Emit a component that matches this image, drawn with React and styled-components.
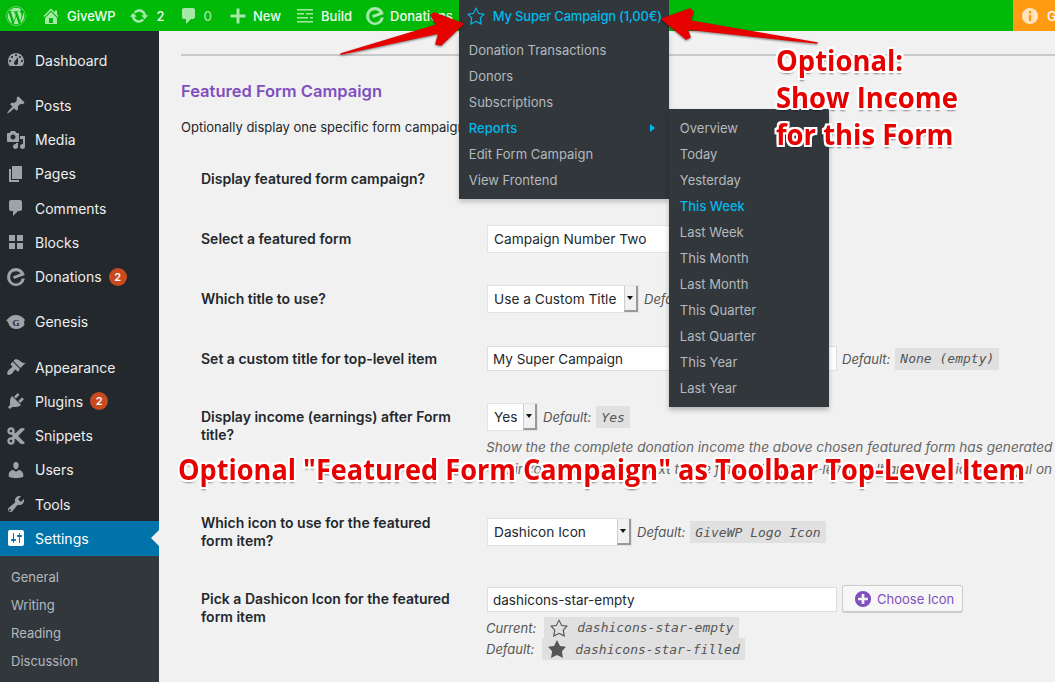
import React from "react";
import styled, { createGlobalStyle } from "styled-components";
import { FaWordpress, FaCut } from "react-icons/fa";

const GlobalStyle = createGlobalStyle`
  html, body {
    margin: 0;
    padding: 0;
    background: #f1f1f1;
    font-family: Inter, "Liberation Sans", sans-serif;
    overflow: hidden;
  }
`;

const icons = {
  dashboard:
    "M3.76 16h12.48c1.1-1.37 1.76-3.11 1.76-5 0-4.42-3.58-8-8-8s-8 3.58-8 8c0 1.89.66 3.63 1.76 5zM10 4c.55 0 1 .45 1 1s-.45 1-1 1-1-.45-1-1 .45-1 1-1zM6 6c.55 0 1 .45 1 1s-.45 1-1 1-1-.45-1-1 .45-1 1-1zm8 0c.55 0 1 .45 1 1s-.45 1-1 1-1-.45-1-1 .45-1 1-1zm-5.37 5.55L12 7v6c0 1.1-.9 2-2 2s-2-.9-2-2c0-.57.24-1.08.63-1.45zM4 10c.55 0 1 .45 1 1s-.45 1-1 1-1-.45-1-1 .45-1 1-1zm12 0c.55 0 1 .45 1 1s-.45 1-1 1-1-.45-1-1 .45-1 1-1z",
  pin: "M10.44 3.02l1.82-1.82 6.36 6.35-1.83 1.82c-1.05-.68-2.48-.57-3.41.36l-.75.75c-.92.93-1.04 2.35-.35 3.41l-1.83 1.82-2.41-2.41-2.8 2.79c-.42.42-3.38 2.71-3.8 2.29s1.86-3.39 2.28-3.81l2.79-2.79L4.1 9.36l1.83-1.82c1.05.69 2.48.57 3.41-.36l.75-.75c.93-.92 1.05-2.35.35-3.41z",
  media:
    "M13 11V4c0-.55-.45-1-1-1h-1.67L9 1H5L3.67 3H2c-.55 0-1 .45-1 1v7c0 .55.45 1 1 1h10c.55 0 1-.45 1-1zM7 4.5c1.38 0 2.5 1.12 2.5 2.5S8.38 9.5 7 9.5 4.5 8.38 4.5 7 5.62 4.5 7 4.5zM14 6h5v10.5c0 1.38-1.12 2.5-2.5 2.5S14 17.88 14 16.5s1.12-2.5 2.5-2.5c.17 0 .34.02.5.05V9h-3V6zm-4 8.05V13h2v3.5c0 1.38-1.12 2.5-2.5 2.5S7 17.88 7 16.5 8.12 14 9.5 14c.17 0 .34.02.5.05z",
  pages: "M6 15V2h10v13H6zm-1 1h8v2H3V5h2v11z",
  comment:
    "M5 2h9c1.1 0 2 .9 2 2v7c0 1.1-.9 2-2 2h-2l-5 5v-5H5c-1.1 0-2-.9-2-2V4c0-1.1.9-2 2-2z",
  blocks: "M3 3h6v6H3zM11 3h6v6h-6zM3 11h6v6H3zM11 11h6v6h-6z",
  appearance:
    "M14.48 11.06L7.41 3.99l1.5-1.5c.5-.56 2.3-.47 3.51.32 1.21.8 1.43 1.28 2.91 2.1 1.18.64 2.45 1.26 4.45.85zm-.71.71L6.7 4.7 4.93 6.47c-.39.39-.39 1.02 0 1.41l1.06 1.06c.39.39.39 1.03 0 1.42-.6.6-1.43 1.11-2.21 1.69-.35.26-.7.53-1.01.84-1.34 1.34-1.81 3.09-1.44 4.22.17.44.35.61.67.64 1.13.38 2.88-.1 4.24-1.46.31-.31.58-.66.84-1.01.58-.78 1.09-1.61 1.69-2.21.39-.39 1.03-.39 1.42 0l1.06 1.06c.39.39 1.02.39 1.41 0z",
  plugins:
    "M13.11 4.36L9.87 7.6 8 5.73l3.24-3.24c.35-.34 1.05-.2 1.56.32.52.51.66 1.21.31 1.55zm-8 1.77l.91-1.12 9.01 9.01-1.19.84c-.71.71-2.63 1.16-3.82 1.16H6.14L4.9 17.26c-.59.59-1.54.59-2.12 0-.59-.58-.59-1.53 0-2.12l1.24-1.24v-3.88c0-1.13.4-3.19 1.09-3.89zm7.26 3.97l3.24-3.24c.34-.35 1.04-.21 1.55.31.52.51.66 1.21.31 1.55l-3.24 3.25z",
  users:
    "M10 9.25c-2.27 0-2.73-3.44-2.73-3.44C7 4.02 7.82 2 9.97 2c2.16 0 2.98 2.02 2.71 3.81 0 0-.41 3.44-2.68 3.44zm0 2.57L12.72 10c2.39 0 4.52 2.33 4.52 4.53v2.49s-3.65 1.13-7.24 1.13c-3.65 0-7.24-1.13-7.24-1.13v-2.49c0-2.25 1.94-4.48 4.47-4.48z",
  tools:
    "M16.68 9.77c-1.34 1.34-3.3 1.67-4.95.99l-5.41 6.52c-.99.99-2.59.99-3.57 0-.99-.98-.99-2.58 0-3.57l6.52-5.42c-.68-1.65-.35-3.61.99-4.95 1.28-1.28 3.12-1.62 4.72-1.06l-2.89 2.89 2.82 2.82 2.89-2.87c.53 1.58.18 3.4-1.12 4.67zM3.18 16.82c.39.39 1.02.39 1.41 0 .39-.39.39-1.02 0-1.41-.39-.39-1.02-.39-1.41 0-.39.39-.39 1.02 0 1.41z",
  settings:
    "M18 16V4c0-1.1-.9-2-2-2H4c-1.1 0-2 .9-2 2v12c0 1.1.9 2 2 2h12c1.1 0 2-.9 2-2zM8 11h1c.55 0 1 .45 1 1s-.45 1-1 1H8v1.5c0 .28-.22.5-.5.5s-.5-.22-.5-.5V13H6c-.55 0-1-.45-1-1s.45-1 1-1h1V5.5c0-.28.22-.5.5-.5s.5.22.5.5V11zm5-2h-1c-.55 0-1-.45-1-1s.45-1 1-1h1V5.5c0-.28.22-.5.5-.5s.5.22.5.5V7h1c.55 0 1 .45 1 1s-.45 1-1 1h-1v5.5c0 .28-.22.5-.5.5s-.5-.22-.5-.5V9z",
  home: "M16 8.5l1.53 1.53-1.06 1.06L10 4.62l-6.47 6.47-1.06-1.06L10 2.5l4 4v-2h2v4zm-6-2.46l6 5.99V18H4v-5.97zM12 17v-5H8v5h4z",
  update:
    "M10.2 3.28c3.53 0 6.43 2.61 6.92 6h2.08l-3.5 4-3.5-4h2.32c-.45-1.97-2.21-3.44-4.32-3.44-1.45 0-2.73.71-3.54 1.78L4.95 5.66C6.23 4.2 8.11 3.28 10.2 3.28zm-.4 13.44c-3.52 0-6.43-2.61-6.92-6H.8l3.5-4c1.17 1.33 2.33 2.67 3.5 4H5.48c.45 1.97 2.21 3.44 4.32 3.44 1.45 0 2.73-.71 3.54-1.78l1.71 1.95c-1.28 1.46-3.15 2.39-5.25 2.39z",
  plus: "M17.5 8.5v3h-6v6h-3v-6h-6v-3h6v-6h3v6z",
  build: "M2 3h16v1.5H2zM2 7h7v1.5H2zM11 7h7v1.5h-7zM2 11h11v1.5H2zM15 11h3v1.5h-3zM2 15h16v1.5H2z",
  starEmpty:
    "M10 1L7 7l-6 .75 4.13 4.62L4 19l6-3 6 3-1.12-6.63L19 7.75 13 7zm0 2.24l2.34 4.68 4.34.54-3.06 3.43.84 4.98L10 14.76l-4.46 2.13.84-4.98-3.06-3.43 4.34-.54z",
  starFilled: "M10 1l3 6 6 .75-4.12 4.62L16 19l-6-3-6 3 1.13-6.63L1 7.75 7 7z",
  plusAlt:
    "M10 1a9 9 0 1 0 0 18 9 9 0 0 0 0-18zm5.5 10.5h-4v4h-3v-4h-4v-3h4v-4h3v4h4z",
  info: "M10 1a9 9 0 1 0 0 18 9 9 0 0 0 0-18zm-1.3 3.5h2.6v2.6H8.7zM8.7 9h2.6v6.5H8.7z",
  give: "M10 1a9 9 0 1 0 8.9 10.5h-3.2A5.8 5.8 0 0 1 4.2 10 5.8 5.8 0 0 1 14.6 6.5L7 9.2l1 2.8 10.8-3.9A9 9 0 0 0 10 1z",
};

const Glyph = ({ name, size = 20, color }) => (
  <svg width={size} height={size} viewBox="0 0 20 20" fill={color || "currentColor"} fillRule="evenodd" style={{ flex: "none" }}>
    <path d={icons[name]} />
  </svg>
);

const GenesisIcon = () => (
  <svg width="20" height="20" viewBox="0 0 20 20" style={{ flex: "none" }}>
    <path
      fill="currentColor"
      d="M0 8c2.5-.5 3.5-5 9.5-5 4.5 0 7.5 2 9.5 5-.6.8-1 1.5-1 2.5s.4 1.2.8 1.8C17 15.5 14 17 10 17c-4.5 0-6.5-3-7.500-5.500C2 10 1 9 0 8z"
    />
    <text x="10" y="13.5" textAnchor="middle" fontSize="9" fontWeight="700" fill="#23282d" fontFamily="Liberation Serif, serif">G</text>
  </svg>
);

const Page = styled.div`
  position: relative;
  width: 1055px;
  height: 682px;
  overflow: hidden;
  background: #f1f1f1;
  color: #23282d;
`;

/* top bar */
const Bar = styled.div`
  position: relative;
  z-index: 5;
  display: flex;
  align-items: center;
  height: 31px;
  background: #00b908;
  color: #f0fbf0;
  font-size: 13px;
  font-weight: 500;
`;
const BarItem = styled.div`
  display: flex;
  align-items: center;
  gap: ${(p) => p.$gap || 8}px;
  margin-left: ${(p) => p.$left || 0}px;
  color: ${(p) => (p.$dim ? "#9fe6a2" : "inherit")};
  svg {
    color: #a6e8a8;
  }
`;
const Campaign = styled.div`
  position: relative;
  display: flex;
  align-items: center;
  gap: 7px;
  width: 210px;
  height: 31px;
  margin-left: 6px;
  padding-left: 7px;
  box-sizing: border-box;
  background: #32373c;
  color: #00b9eb;
  letter-spacing: -0.2px;
`;
const Dropdown = styled.div`
  position: absolute;
  top: 31px;
  left: 0;
  width: 210px;
  padding: 6px 0;
  background: #32373c;
  box-shadow: 0 3px 5px rgba(0, 0, 0, 0.2);
  font-weight: 400;
  letter-spacing: 0;
`;
const Flyout = styled.div`
  position: absolute;
  top: 109px;
  left: 210px;
  width: 160px;
  padding: 6px 0;
  background: #32373c;
  box-shadow: 0 3px 5px rgba(0, 0, 0, 0.25);
  letter-spacing: 0;
`;
const MenuLink = styled.div`
  position: relative;
  height: 26px;
  line-height: 26px;
  padding-left: ${(p) => p.$indent || 10}px;
  color: ${(p) => (p.$active ? "#00b9eb" : "#b4b9be")};
  font-size: 13px;
  font-weight: ${(p) => (p.$active ? 500 : 400)};
  white-space: nowrap;
`;
const Caret = styled.span`
  position: absolute;
  top: 9px;
  right: 14px;
  border-left: 5px solid #00b9eb;
  border-top: 4px solid transparent;
  border-bottom: 4px solid transparent;
`;
const Notice = styled.div`
  display: flex;
  align-items: center;
  gap: 8px;
  width: 42px;
  height: 31px;
  margin-left: auto;
  padding-left: 8px;
  box-sizing: border-box;
  overflow: hidden;
  background: #ff9a12;
  color: #ffe3bd;
  span {
    color: #fff;
  }
`;

/* layout */
const Body = styled.div`
  display: flex;
  height: 651px;
`;
const Sidebar = styled.nav`
  flex: none;
  width: 159px;
  padding-top: 12px;
  box-sizing: border-box;
  background: #23282d;
`;
const SideItem = styled.div`
  position: relative;
  display: flex;
  align-items: center;
  height: 34.25px;
  margin-top: ${(p) => (p.$sep ? 11 : 0)}px;
  padding-left: 6px;
  gap: 9px;
  box-sizing: border-box;
  background: ${(p) => (p.$current ? "#0073aa" : "transparent")};
  color: ${(p) => (p.$current ? "#fff" : "#eeeeee")};
  font-size: 14px;
  svg {
    color: ${(p) => (p.$current ? "#fff" : "#9ea3a8")};
  }
`;
const Pointer = styled.span`
  position: absolute;
  top: 9px;
  right: 0;
  border-right: 8px solid #f1f1f1;
  border-top: 8px solid transparent;
  border-bottom: 8px solid transparent;
`;
const Badge = styled.span`
  display: inline-block;
  width: 18px;
  height: 18px;
  margin-left: -2px;
  border-radius: 50%;
  background: #ca4a1f;
  color: #fff;
  font-size: 11px;
  font-weight: 600;
  line-height: 18px;
  text-align: center;
`;
const SubMenu = styled.div`
  padding-top: 7px;
  background: #32373c;
  height: 130px;
`;
const SubItem = styled.div`
  height: 28.3px;
  line-height: 28.3px;
  padding-left: 11px;
  color: #b4b9be;
  font-size: 13px;
`;

/* main */
const Main = styled.main`
  flex: 1;
  min-width: 0;
  padding: 23px 0 0 22px;
  overflow: hidden;
`;
const Rule = styled.div`
  height: 2px;
  background: #c9c9c9;
`;
const Heading = styled.h2`
  margin: 24px 0 0;
  color: #7f4fc0;
  font-size: 16.5px;
  font-weight: 600;
  line-height: 22px;
`;
const Intro = styled.p`
  margin: 16px 0 0;
  height: 18px;
  font-size: 13px;
  line-height: 18px;
  white-space: nowrap;
`;
const FormRow = styled.div`
  display: flex;
  height: ${(p) => p.$height}px;
  padding-left: 20px;
  margin-top: ${(p) => p.$top || 0}px;
`;
const Label = styled.div`
  flex: none;
  width: 286px;
  padding: 19px 30px 0 0;
  box-sizing: border-box;
  font-size: 14px;
  font-weight: 600;
  line-height: 18px;
`;
const Field = styled.div`
  flex: 1;
  min-width: 0;
  padding-top: ${(p) => p.$top || 14}px;
`;
const Inline = styled.div`
  display: flex;
  align-items: center;
  gap: 5px;
`;
const SelectBox = styled.div`
  display: flex;
  align-items: stretch;
  width: ${(p) => p.$width}px;
  height: 28px;
  box-sizing: border-box;
  border: 1px solid #e2e2e2;
  background: #fff;
  font-size: 13.7px;
  line-height: 27px;
`;
const SelectText = styled.span`
  flex: 1;
  padding-left: 6px;
  white-space: nowrap;
  overflow: hidden;
`;
const SelectArrow = styled.span`
  position: relative;
  flex: none;
  width: 14px;
  box-sizing: border-box;
  background: #f1f1f1;
  border-left: 1px solid #ccc;
  border-right: 2px solid #999;
  border-bottom: 2px solid #999;
  &::after {
    content: "";
    position: absolute;
    top: 10px;
    left: 2px;
    border-top: 4px solid #111;
    border-left: 3px solid transparent;
    border-right: 3px solid transparent;
  }
`;
const TextInput = styled.div`
  flex: none;
  width: 350px;
  height: 25px;
  box-sizing: border-box;
  padding-left: 5px;
  border: 1px solid #ddd;
  background: #fff;
  font-size: 13.5px;
  line-height: 24px;
`;
const Hint = styled.span`
  color: #555;
  font-size: 13px;
  font-style: italic;
  white-space: nowrap;
`;
const Code = styled.code`
  display: inline-flex;
  align-items: center;
  gap: 8px;
  height: 22px;
  padding: 0 5px;
  background: #e0e0e0;
  color: #555;
  font-family: "DejaVu Sans Mono", "Liberation Mono", monospace;
  font-size: 13px;
  font-style: italic;
`;
const Description = styled.div`
  margin: 5px 0 0 -1px;
  width: 580px;
  color: #666;
  font-size: 13.6px;
  font-style: italic;
  line-height: 22px;
  white-space: nowrap;
`;
const ChooseButton = styled.div`
  display: flex;
  align-items: center;
  gap: 5px;
  width: 121px;
  height: 28px;
  margin-top: -1px;
  padding-left: 11px;
  box-sizing: border-box;
  border: 1px solid #ccc;
  border-bottom-width: 2px;
  border-radius: 3px;
  background: #f7f7f7;
  color: #7f4fc0;
  font-size: 13px;
`;
const IconRows = styled.div`
  margin-top: 4px;
`;
const IconLine = styled.div`
  display: flex;
  align-items: center;
  gap: 8px;
  height: 21.5px;
  margin-left: -1px;
`;

/* annotations over the screenshot */
const Overlay = styled.svg`
  position: absolute;
  top: 0;
  left: 0;
  z-index: 10;
  pointer-events: none;
  filter: drop-shadow(0 1px 1px rgba(0, 0, 0, 0.5));
`;
const ArrowShape = styled.polygon`
  fill: #e60000;
  stroke: #e60000;
  stroke-width: 1.5;
  stroke-linejoin: round;
`;
const Callout = styled.div`
  position: absolute;
  z-index: 11;
  top: ${(p) => p.$y}px;
  left: ${(p) => p.$x}px;
  color: #e60000;
  font-family: "Open Sans", "Noto Sans", sans-serif;
  font-size: 29px;
  font-weight: 700;
  line-height: 37px;
  white-space: nowrap;
  transform: scaleX(${(p) => p.$squeeze});
  transform-origin: left center;
  text-shadow: 2px 0 0 #fff, -2px 0 0 #fff, 0 2px 0 #fff, 0 -2px 0 #fff,
    2px 2px 0 #fff, -2px 2px 0 #fff, 2px -2px 0 #fff, -2px -2px 0 #fff,
    0 3px 2px rgba(0, 0, 0, 0.45);
`;

const menu = [
  { label: "Dashboard", icon: "dashboard" },
  { label: "Posts", icon: "pin", sep: true },
  { label: "Media", icon: "media" },
  { label: "Pages", icon: "pages" },
  { label: "Comments", icon: "comment" },
  { label: "Blocks", icon: "blocks" },
  { label: "Donations", icon: "give", badge: 2 },
  { label: "Genesis", icon: "genesis", sep: true },
  { label: "Appearance", icon: "appearance", sep: true },
  { label: "Plugins", icon: "plugins", badge: 2 },
  { label: "Snippets", icon: "snippets" },
  { label: "Users", icon: "users" },
  { label: "Tools", icon: "tools" },
];
const campaignLinks = ["Donation Transactions", "Donors", "Subscriptions", "Reports", "Edit Form Campaign", "View Frontend"];
const reportLinks = ["Overview", "Today", "Yesterday", "This Week", "Last Week", "This Month", "Last Month", "This Quarter", "Last Quarter", "This Year", "Last Year"];

const sideIcon = (icon) => {
  if (icon === "snippets") return <FaCut size={20} />;
  if (icon === "genesis") return <GenesisIcon />;
  return <Glyph name={icon} />;
};

const App = () => {
  return (
    <Page>
      <GlobalStyle />
      <Bar>
        <BarItem $left={6}><FaWordpress size={20} color="#a6e8a8" /></BarItem>
        <BarItem $left={15} $gap={6}><Glyph name="home" size={20} />GiveWP</BarItem>
        <BarItem $left={13}><Glyph name="update" size={20} />2</BarItem>
        <BarItem $left={14} $dim $gap={5}><Glyph name="comment" size={20} />0</BarItem>
        <BarItem $left={16} $gap={5}><Glyph name="plus" size={20} />New</BarItem>
        <BarItem $left={14} $gap={6}><Glyph name="build" size={20} />Build</BarItem>
        <BarItem $left={13} $gap={5}><Glyph name="give" size={20} />Donations</BarItem>
        <Campaign>
          <Glyph name="starEmpty" size={20} />
          My Super Campaign (1,00€)
          <Dropdown>
            {campaignLinks.map((link) => (
              <MenuLink key={link} $active={link === "Reports"}>
                {link}
                {link === "Reports" && <Caret />}
              </MenuLink>
            ))}
          </Dropdown>
          <Flyout>
            {reportLinks.map((link) => (
              <MenuLink key={link} $indent={11} $active={link === "This Week"}>{link}</MenuLink>
            ))}
          </Flyout>
        </Campaign>
        <Notice><Glyph name="info" size={18} /><span>G</span></Notice>
      </Bar>

      <Body>
        <Sidebar>
          {menu.map((item) => (
            <SideItem key={item.label} $sep={item.sep}>
              {sideIcon(item.icon)}
              {item.label}
              {item.badge && <Badge>{item.badge}</Badge>}
            </SideItem>
          ))}
          <SideItem $current>
            <Glyph name="settings" />
            Settings
            <Pointer />
          </SideItem>
          <SubMenu>
            {["General", "Writing", "Reading", "Discussion"].map((label) => (
              <SubItem key={label}>{label}</SubItem>
            ))}
          </SubMenu>
        </Sidebar>

        <Main>
          <Rule />
          <Heading>Featured Form Campaign</Heading>
          <Intro>Optionally display one specific form campaign as a top-level toolbar item</Intro>

          <FormRow $height={60} $top={15}>
            <Label>Display featured form campaign?</Label>
            <Field />
          </FormRow>
          <FormRow $height={60}>
            <Label>Select a featured form</Label>
            <Field>
              <SelectBox $width={200}><SelectText>Campaign Number Two</SelectText></SelectBox>
            </Field>
          </FormRow>
          <FormRow $height={60}>
            <Label>Which title to use?</Label>
            <Field>
              <Inline>
                <SelectBox $width={152}><SelectText>Use a Custom Title</SelectText><SelectArrow /></SelectBox>
                <Hint>Default:</Hint>
              </Inline>
            </Field>
          </FormRow>
          <FormRow $height={58}>
            <Label>Set a custom title for top-level item</Label>
            <Field $top={15}>
              <Inline>
                <TextInput>My Super Campaign</TextInput>
                <Hint>Default:</Hint>
                <Code>None (empty)</Code>
              </Inline>
            </Field>
          </FormRow>
          <FormRow $height={106}>
            <Label>Display income (earnings) after Form title?</Label>
            <Field>
              <Inline>
                <SelectBox $width={51}><SelectText>Yes</SelectText><SelectArrow /></SelectBox>
                <Hint>Default:</Hint>
                <Code>Yes</Code>
              </Inline>
              <Description>
                Show the the complete donation income the above chosen featured form has generated
                <br />
                The income gets shown next to the form title as top-level toolbar item which is useful on t
              </Description>
            </Field>
          </FormRow>
          <FormRow $height={76}>
            <Label>Which icon to use for the featured form item?</Label>
            <Field $top={23}>
              <Inline>
                <SelectBox $width={145}><SelectText>Dashicon Icon</SelectText><SelectArrow /></SelectBox>
                <Hint>Default:</Hint>
                <Code>GiveWP Logo Icon</Code>
              </Inline>
            </Field>
          </FormRow>
          <FormRow $height={100}>
            <Label>Pick a Dashicon Icon for the featured form item</Label>
            <Field $top={15}>
              <Inline>
                <TextInput>dashicons-star-empty</TextInput>
                <ChooseButton><Glyph name="plusAlt" size={18} />Choose Icon</ChooseButton>
              </Inline>
              <IconRows>
                <IconLine>
                  <Hint>Current:</Hint>
                  <Code><Glyph name="starEmpty" />dashicons-star-empty</Code>
                </IconLine>
                <IconLine>
                  <Hint>Default:</Hint>
                  <Code><Glyph name="starFilled" />dashicons-star-filled</Code>
                </IconLine>
              </IconRows>
            </Field>
          </FormRow>
        </Main>
      </Body>

      <Overlay width="1055" height="682" viewBox="0 0 1055 682">
        <ArrowShape points="341,54 437,25 431,15 434,13 463,24 441,45 436,44 439,33" />
        <ArrowShape points="817,43 690,21 693,12 690,9 662,19 686,39 690,37 687,29" />
      </Overlay>
      <Callout $x={776} $y={41} $squeeze={0.945}>Optional:</Callout>
      <Callout $x={776} $y={78} $squeeze={0.945}>Show Income</Callout>
      <Callout $x={776} $y={115} $squeeze={0.945}>for this Form</Callout>
      <Callout $x={178} $y={450} $squeeze={0.935}>Optional "Featured Form Campaign" as Toolbar Top-Level Item</Callout>
    </Page>
  );
};

export default App;
